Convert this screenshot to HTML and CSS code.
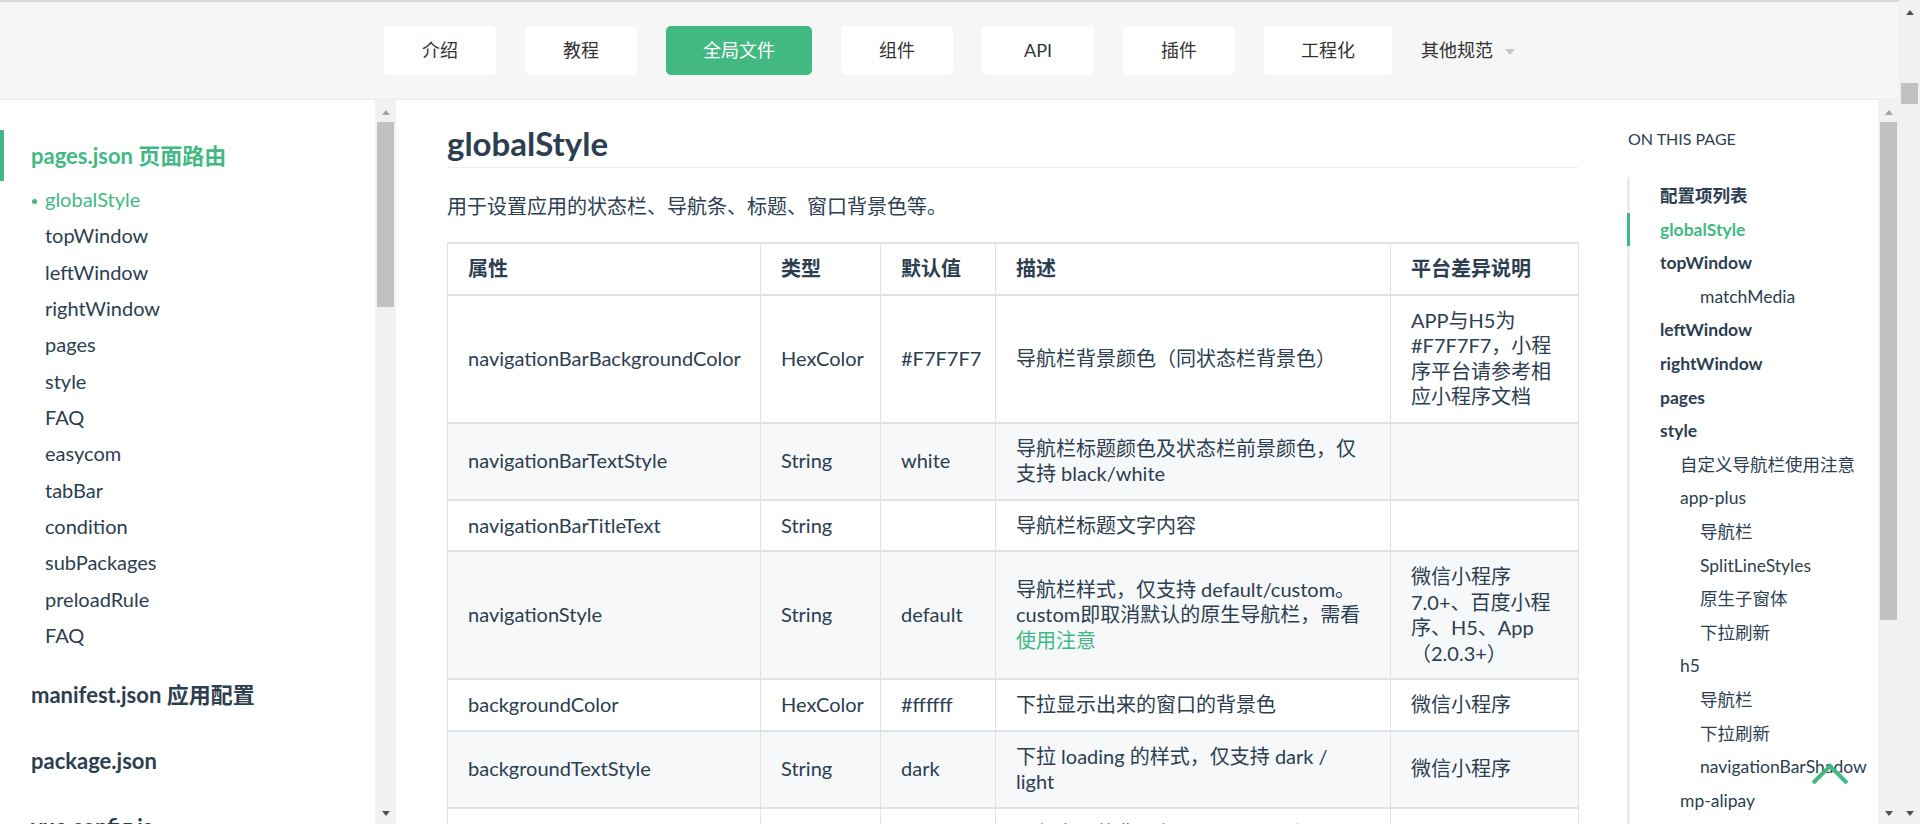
FILE: index.html
```html
<!DOCTYPE html>
<html lang="zh-CN">
<head>
<meta charset="utf-8">
<title>globalStyle</title>
<link rel="stylesheet" href="styles.css">
</head>
<body>
<div class="app">
  <header class="topbar">
    <nav class="nav">
      <a class="nav-btn">介绍</a>
      <a class="nav-btn">教程</a>
      <a class="nav-btn active">全局文件</a>
      <a class="nav-btn">组件</a>
      <a class="nav-btn">API</a>
      <a class="nav-btn">插件</a>
      <a class="nav-btn">工程化</a>
      <span class="nav-more">其他规范<i class="caret"></i></span>
    </nav>
  </header>
  <div class="body">
    <aside class="sidebar">
      <div class="sidebar-inner">
        <div class="side-head active">pages.json 页面路由</div>
        <ul class="side-list">
          <li class="active">globalStyle</li>
          <li>topWindow</li>
          <li>leftWindow</li>
          <li>rightWindow</li>
          <li>pages</li>
          <li>style</li>
          <li>FAQ</li>
          <li>easycom</li>
          <li>tabBar</li>
          <li>condition</li>
          <li>subPackages</li>
          <li>preloadRule</li>
          <li>FAQ</li>
        </ul>
        <div class="side-head">manifest.json 应用配置</div>
        <div class="side-head">package.json</div>
        <div class="side-head">vue.config.js</div>
      </div>
      <div class="sbar">
        <div class="sbar-btn up light"><i></i></div>
        <div class="sbar-track"><div class="sbar-thumb thumb-side"></div></div>
        <div class="sbar-btn down"><i></i></div>
      </div>
    </aside>

    <main class="content">
      <div class="doc">
        <h2 class="doc-title">globalStyle</h2>
        <p class="doc-text">用于设置应用的状态栏、导航条、标题、窗口背景色等。</p>
        <table class="props">
          <colgroup>
            <col class="c1"><col class="c2"><col class="c3"><col class="c4"><col class="c5">
          </colgroup>
          <thead>
            <tr><th>属性</th><th>类型</th><th>默认值</th><th>描述</th><th>平台差异说明</th></tr>
          </thead>
          <tbody>
            <tr><td>navigationBarBackgroundColor</td><td>HexColor</td><td>#F7F7F7</td><td>导航栏背景颜色（同状态栏背景色）</td><td>APP与H5为#F7F7F7，小程序平台请参考相应小程序文档</td></tr>
            <tr><td>navigationBarTextStyle</td><td>String</td><td>white</td><td>导航栏标题颜色及状态栏前景颜色，仅支持 black/white</td><td></td></tr>
            <tr><td>navigationBarTitleText</td><td>String</td><td></td><td>导航栏标题文字内容</td><td></td></tr>
            <tr><td>navigationStyle</td><td>String</td><td>default</td><td>导航栏样式，仅支持 default/custom。custom即取消默认的原生导航栏，需看<a class="link">使用注意</a></td><td>微信小程序7.0+、百度小程序、H5、App（2.0.3+）</td></tr>
            <tr><td>backgroundColor</td><td>HexColor</td><td>#ffffff</td><td>下拉显示出来的窗口的背景色</td><td>微信小程序</td></tr>
            <tr><td>backgroundTextStyle</td><td>String</td><td>dark</td><td>下拉 loading 的样式，仅支持 dark / light</td><td>微信小程序</td></tr>
            <tr><td>backgroundColorTop</td><td>HexColor</td><td>#ffffff</td><td>顶部窗口的背景色（bounce回弹区域），仅 iOS 平台支持</td><td>仅 iOS 平台</td></tr>
          </tbody>
        </table>
      </div>
    </main>

    <aside class="toc">
      <div class="toc-inner">
        <div class="toc-title">On this page</div>
        <ul class="toc-list">
          <li class="l2">配置项列表</li>
          <li class="l2 active">globalStyle</li>
          <li class="l2">topWindow</li>
          <li class="l4">matchMedia</li>
          <li class="l2">leftWindow</li>
          <li class="l2">rightWindow</li>
          <li class="l2">pages</li>
          <li class="l2">style</li>
          <li class="l3">自定义导航栏使用注意</li>
          <li class="l3">app-plus</li>
          <li class="l4">导航栏</li>
          <li class="l4">SplitLineStyles</li>
          <li class="l4">原生子窗体</li>
          <li class="l4">下拉刷新</li>
          <li class="l3">h5</li>
          <li class="l4">导航栏</li>
          <li class="l4">下拉刷新</li>
          <li class="l4">navigationBarShadow</li>
          <li class="l3">mp-alipay</li>
          <li class="l4">导航栏</li>
          <li class="l4">下拉刷新</li>
        </ul>
      </div>
      <div class="sbar">
        <div class="sbar-btn up light"><i></i></div>
        <div class="sbar-track"><div class="sbar-thumb thumb-toc"></div></div>
        <div class="sbar-btn down"><i></i></div>
      </div>
    </aside>
  </div>
</div>

<div class="sbar page-sbar">
  <div class="sbar-btn up"><i></i></div>
  <div class="sbar-track"><div class="sbar-thumb thumb-page"></div></div>
  <div class="sbar-btn down"><i></i></div>
</div>

<svg class="backtop" width="44" height="28" viewBox="0 0 44 28" aria-hidden="true">
  <path d="M5 23 L22 6 L39 23" fill="none" stroke="#42b983" stroke-width="4"/>
</svg>
</body>
</html>
```
FILE: styles.css
```css
* { box-sizing: border-box; }

html, body {
  margin: 0;
  height: 824px;
  overflow: hidden;
}

body {
  display: flex;
  position: relative;
  font-family: Lato, "Noto Sans CJK SC", sans-serif;
  color: #2c3e50;
  background: #fff;
}

.app {
  flex: 1;
  min-width: 0;
  display: flex;
  flex-direction: column;
}

/* ---------- top bar ---------- */
.topbar {
  flex: none;
  height: 100px;
  border-top: 2px solid #d9d9d9;
  border-bottom: 1px solid #eaecef;
  background: #f6f6f6;
  display: flex;
  align-items: center;
  justify-content: center;
}

.nav {
  display: flex;
  align-items: center;
  gap: 29px;
}

.nav-btn {
  height: 49px;
  min-width: 112px;
  padding: 0 37px;
  border-radius: 5px;
  background: #fff;
  color: #333;
  font-size: 18px;
  line-height: 49px;
  text-align: center;
  white-space: nowrap;
}

.nav-btn.active {
  background: #42b983;
  color: #fff;
}

.nav-more {
  display: flex;
  align-items: center;
  color: #333;
  font-size: 18px;
  line-height: 49px;
  white-space: nowrap;
}

.caret {
  width: 0;
  height: 0;
  margin-left: 12px;
  margin-top: 2px;
  border-left: 5px solid transparent;
  border-right: 5px solid transparent;
  border-top: 6px solid #c4c4c4;
}

/* ---------- body ---------- */
.body {
  flex: 1;
  min-height: 0;
  display: flex;
}

/* ---------- left sidebar ---------- */
.sidebar {
  flex: none;
  width: 396px;
  display: flex;
}

.sidebar-inner {
  flex: 1;
  min-width: 0;
  overflow: hidden;
  padding-top: 30px;
}

.side-head {
  height: 51px;
  line-height: 51px;
  margin-top: 15.4px;
  padding-left: 31px;
  font-size: 22px;
  font-weight: 700;
  white-space: nowrap;
}

.side-head:first-child { margin-top: 0; }

.side-head.active {
  border-left: 4px solid #42b983;
  padding-left: 27px;
  color: #42b983;
}

.side-list {
  list-style: none;
  margin: 0;
  padding: 0;
}

.side-list li {
  height: 36.33px;
  line-height: 36.33px;
  padding-left: 45px;
  font-size: 20px;
  white-space: nowrap;
}

.side-list li.active {
  padding-left: 32px;
  color: #42b983;
}

.side-list li.active::before {
  content: "";
  display: inline-block;
  width: 5px;
  height: 5px;
  margin-right: 8px;
  border-radius: 50%;
  background: #42b983;
  vertical-align: middle;
}

/* ---------- fake scrollbars ---------- */
.sbar {
  flex: none;
  width: 21px;
  display: flex;
  flex-direction: column;
  background: #f1f1f1;
}

.page-sbar { height: 824px; }

.sbar-btn {
  flex: none;
  height: 21px;
  display: flex;
  align-items: center;
  justify-content: center;
}

.sbar-btn.up { padding-top: 3px; }

.sbar-btn i {
  width: 0;
  height: 0;
  border-left: 4.5px solid transparent;
  border-right: 4.5px solid transparent;
}

.sbar-btn.up i { border-bottom: 5px solid #505050; }
.sbar-btn.down i { border-top: 5px solid #505050; }
.sbar-btn.up.light i { border-bottom-color: #a3a3a3; }

.sbar-track {
  flex: 1;
  min-height: 0;
  padding: 0 2px;
}

.sbar-thumb { background: #c1c1c1; }

.thumb-side { margin-top: 1px; height: 185px; }
.thumb-toc { margin-top: 1px; height: 498px; }
.thumb-page { margin-top: 62px; height: 21px; }

/* ---------- main content ---------- */
.content {
  flex: 1;
  min-width: 0;
  overflow: hidden;
  padding-left: 51px;
}

.doc { width: 1131px; }

.doc-title {
  margin: 23px 0 0;
  padding-bottom: 4px;
  border-bottom: 1px solid #eaecef;
  font-size: 33px;
  font-weight: 700;
  line-height: 40px;
}

.doc-text {
  margin: 25px 0 0;
  font-size: 20px;
  line-height: 26px;
}

.props {
  margin-top: 23px;
  width: 1131px;
  table-layout: fixed;
  border-collapse: collapse;
  font-size: 20px;
  line-height: 25.5px;
}

.c1 { width: 313px; }
.c2 { width: 120px; }
.c3 { width: 115px; }
.c4 { width: 395px; }
.c5 { width: 188px; }

.props th,
.props td {
  padding: 12px 20px;
  border-left: 1px solid #dfe2e5;
  border-right: 1px solid #dfe2e5;
  border-top: 2px solid #dfe2e5;
  border-bottom: 2px solid #dfe2e5;
  text-align: left;
  vertical-align: middle;
}

.props th { font-weight: 700; }

.props td:nth-child(4) { padding-right: 28px; }

.props tbody tr:nth-child(even) { background: #f6f8fa; }

.link {
  color: #42b983;
  text-decoration: none;
}

/* ---------- right toc ---------- */
.toc {
  flex: none;
  width: 272px;
  display: flex;
}

.toc-inner {
  flex: 1;
  min-width: 0;
  overflow: hidden;
  padding-top: 27px;
}

.toc-title {
  padding-left: 1px;
  font-size: 16px;
  line-height: 24px;
  text-transform: uppercase;
}

.toc-list {
  list-style: none;
  margin: 26px 0 0;
  padding: 2px 0 0;
  border-left: 3px solid #eaecef;
}

.toc-list li {
  height: 33.6px;
  line-height: 33.6px;
  font-size: 17.5px;
  white-space: nowrap;
}

.toc-list .l2 { padding-left: 30px; font-weight: 700; }
.toc-list .l3 { padding-left: 50px; }
.toc-list .l4 { padding-left: 70px; }

.toc-list li.active {
  margin-left: -3px;
  border-left: 3px solid #42b983;
  color: #42b983;
}

/* ---------- back to top ---------- */
.backtop {
  position: absolute;
  left: 1808px;
  top: 760px;
}
```
